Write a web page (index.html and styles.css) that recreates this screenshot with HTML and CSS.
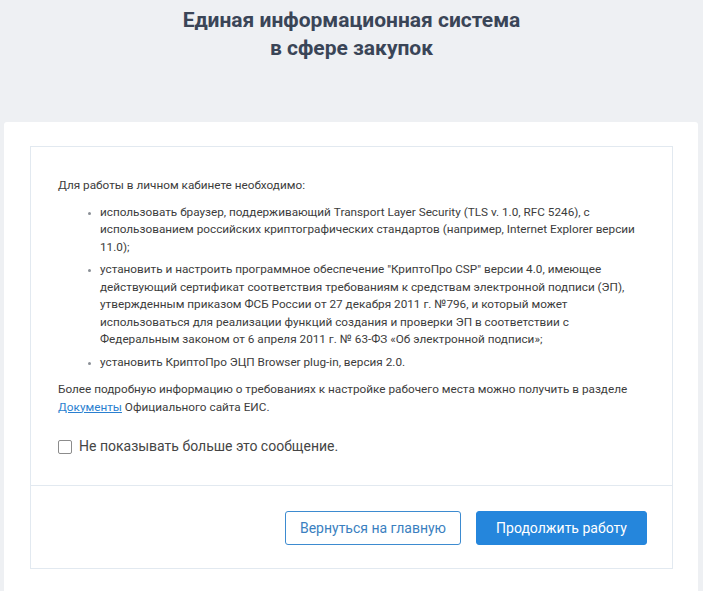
FILE: index.html
```html
<!DOCTYPE html>
<html lang="ru">
<head>
    <meta charset="UTF-8">
    <meta name="viewport" content="width=device-width, initial-scale=1.0">
    <title>ЕИС в сфере закупок</title>
    <link rel="stylesheet" href="styles.css">
</head>
<body>
    <header class="site-header">
        <h1 class="site-title">Единая информационная система<br>в сфере закупок</h1>
    </header>

    <main class="page-card">
        <section class="notice">
            <div class="notice-body">
                <p class="notice-text">Для работы в личном кабинете необходимо:</p>
                <ul class="req-list">
                    <li>использовать браузер, поддерживающий Transport Layer Security (TLS v. 1.0, RFC 5246), с использованием российских криптографических стандартов (например, Internet Explorer версии 11.0);</li>
                    <li>установить и настроить программное обеспечение "КриптоПро CSP" версии 4.0, имеющее действующий сертификат соответствия требованиям к средствам электронной подписи (ЭП), утвержденным приказом ФСБ России от 27 декабря 2011 г. №796, и который может использоваться для реализации функций создания и проверки ЭП в соответствии с Федеральным законом от 6 апреля 2011 г. № 63-ФЗ «Об электронной подписи»;</li>
                    <li>установить КриптоПро ЭЦП Browser plug-in, версия 2.0.</li>
                </ul>
                <p class="notice-text">Более подробную информацию о требованиях к настройке рабочего места можно получить в разделе <a href="#" class="doc-link">Документы</a> Официального сайта ЕИС.</p>

                <label class="dont-show">
                    <input type="checkbox" class="dont-show-box">
                    <span>Не показывать больше это сообщение.</span>
                </label>
            </div>

            <div class="notice-actions">
                <button class="btn btn-outline">Вернуться на главную</button>
                <button class="btn btn-primary">Продолжить работу</button>
            </div>
        </section>
    </main>
</body>
</html>
```

FILE: styles.css
```css
html, body {
    margin: 0;
    padding: 0;
}

body {
    font-family: Roboto, "Liberation Sans", sans-serif;
    background-color: #eef0f3;
    color: #3c3c3c;
    height: 591px;
    overflow: hidden;
}

.site-header {
    height: 122px;
    box-sizing: border-box;
    padding-top: 6px;
}

.site-title {
    margin: 0;
    text-align: center;
    font-size: 21px;
    line-height: 28px;
    font-weight: 700;
    color: #3a4557;
}

.page-card {
    background: #ffffff;
    margin: 0 5px 0 4px;
    border-radius: 3px 3px 0 0;
    padding: 24px 25px 30px 26px;
}

.notice {
    border: 1px solid #e2e9f0;
}

.notice-body {
    padding: 30px 27px 29px 27px;
    font-size: 11.75px;
    line-height: 17.5px;
}

.notice-text {
    margin: 0;
}

.req-list {
    list-style: none;
    margin: 9px 0 10px 0;
    padding: 0 0 0 42px;
}

.req-list li {
    position: relative;
    margin-bottom: 5px;
}

.req-list li::before {
    content: "";
    position: absolute;
    left: -12px;
    top: 8px;
    width: 3px;
    height: 3px;
    border-radius: 50%;
    background: #8a8f96;
}

.doc-link {
    color: #2a7fd0;
    text-decoration: underline;
}

.dont-show {
    display: flex;
    align-items: center;
    gap: 7px;
    margin-top: 22px;
    font-size: 14px;
    color: #454545;
    cursor: pointer;
}

.dont-show-box {
    appearance: none;
    margin: 0;
    width: 14px;
    height: 14px;
    border: 1px solid #8c8c8c;
    border-radius: 2px;
    background: #fff;
}

.notice-actions {
    border-top: 1px solid #e2e9f0;
    display: flex;
    justify-content: flex-end;
    gap: 15px;
    padding: 25px 25px 23px 0;
}

.btn {
    height: 34px;
    border-radius: 3px;
    font-family: Roboto, "Liberation Sans", sans-serif;
    font-size: 14px;
    cursor: pointer;
    box-sizing: border-box;
}

.btn-outline {
    width: 176px;
    background: #ffffff;
    border: 1px solid #3d8bd0;
    color: #3b7fc0;
}

.btn-primary {
    width: 171px;
    background: #2586dc;
    border: 1px solid #2586dc;
    color: #ffffff;
}
```
